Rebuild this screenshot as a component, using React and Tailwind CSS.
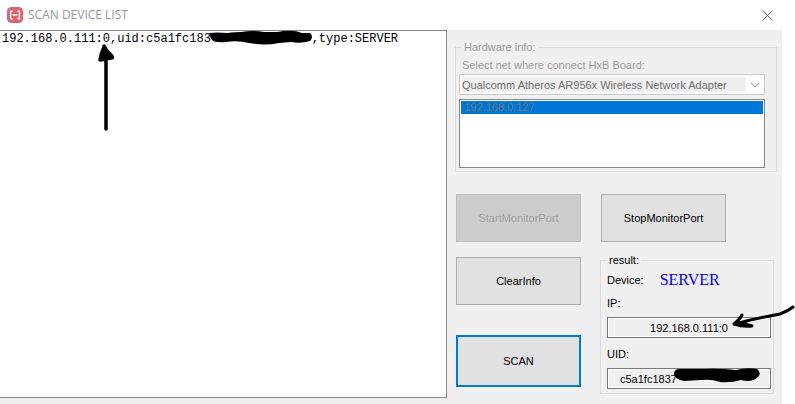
const BUTTON =
  "flex w-full items-center justify-center border text-[11px] leading-4";

function ActionButton({ children, className, disabled }) {
  return (
    <button type="button" disabled={disabled} className={`${BUTTON} ${className}`}>
      {children}
    </button>
  );
}

function AppIcon() {
  return (
    <svg viewBox="0 0 16 16" className="size-4" aria-hidden="true">
      <rect width="16" height="16" rx="4.5" fill="#df6272" />
      <path
        d="M5.6 4.2H3.6V11.8H5.6M10.4 4.2H12.4V11.8H10.4M5.6 8H10.4"
        fill="none"
        stroke="#fff"
        strokeWidth="1.4"
      />
    </svg>
  );
}

function ResultField({ id, label, value, className, children }) {
  return (
    <div className={className}>
      <label htmlFor={id} className="block">
        {label}
      </label>
      <div className="relative mt-[6px]">
        <input
          id={id}
          readOnly
          value={value}
          className="block h-[21px] w-full border border-[#7a7a7a] bg-[#f0f0f0] px-3 text-[11px] outline-none ring-1 ring-inset ring-white text-inherit [text-align:inherit]"
        />
        {children}
      </div>
    </div>
  );
}

export default function App() {
  return (
    <div className="flex min-h-screen flex-col bg-white pr-[13px] font-['Liberation_Sans',Arial,sans-serif] text-[11px] leading-4 text-black">
      <header className="flex h-[30px] items-center gap-[5px] pl-[7px] pr-2">
        <AppIcon />
        <h1 className="flex-1 font-['Open_Sans',sans-serif] text-[12px] text-[#999]">
          SCAN DEVICE LIST
        </h1>
        <button type="button" aria-label="Close" className="p-px">
          <svg viewBox="0 0 11 11" className="size-[11px]" aria-hidden="true">
            <path d="M.5 .5L10.5 10.5M10.5 .5L.5 10.5" stroke="#777" fill="none" />
          </svg>
        </button>
      </header>

      <main className="flex flex-1 items-start bg-[#f0f0f0]">
        <div className="relative min-w-0 flex-1">
          <textarea
            readOnly
            aria-label="Scan log"
            value={"192.168.0.111:0,uid:c5a1fc183" + "\u00a0".repeat(14) + ",type:SERVER"}
            className="block h-[368px] w-full resize-none overflow-hidden whitespace-pre border-y border-r border-[#828790] bg-white pl-[2px] font-['Liberation_Mono',monospace] text-[12px] leading-4 outline-none"
          />
          <svg viewBox="0 0 104 15" className="absolute left-[209px] top-0 h-[15px] w-[104px]" aria-hidden="true">
            <path d="M0 3Q8 2 18 3Q27 2 32 2Q44 0 55 2L68 2Q84 -1 93 3L101 3Q105 7 101 11Q92 14 82 12L70 13Q55 16 40 13Q28 10 17 12Q6 13 3 10Q1 7 0 3Z" />
          </svg>
          <svg viewBox="0 0 18 88" className="absolute left-[97px] top-[13px] h-[88px] w-[18px]" aria-hidden="true">
            <path
              d="M9 86V6M7 4Q4 10 3 17L14 15Q17 15 14 12Q10 9 7 3Z"
              stroke="#000"
              strokeWidth="3.5"
              strokeLinecap="round"
              strokeLinejoin="round"
            />
          </svg>
        </div>

        <section className="w-[335px] shrink-0 pl-2 pr-[5px] pt-[9px]">
          <fieldset disabled className="border border-[#dcdcdc] pb-[3px] pl-[3px] pr-[11px] text-[#9a9a9a]">
            <legend className="ml-[3px] px-[2px]">Hardware info:</legend>
            <label htmlFor="net" className="block pl-[3px] pt-[2px]">
              Select net where connect HxB Board:
            </label>
            <div className="relative mt-px">
              <select
                id="net"
                className="block h-[21px] w-full appearance-none border border-[#ccc] bg-[#f0f0f0] pl-[2px] text-[11px] text-[#6d6d6d] opacity-100 ring-2 ring-inset ring-white"
              >
                <option>Qualcomm Atheros AR956x Wireless Network Adapter</option>
              </select>
              <span className="pointer-events-none absolute inset-y-px right-px flex w-[18px] items-center justify-center bg-white">
                <svg viewBox="0 0 10 6" className="h-[6px] w-[10px]" aria-hidden="true">
                  <path d="M1 .8L5 4.8L9 .8" fill="none" stroke="#aaa" strokeWidth="1.2" />
                </svg>
              </span>
            </div>
            <ul
              role="listbox"
              aria-label="Addresses"
              aria-disabled="true"
              className="mt-1 h-[69px] border border-[#828790] bg-white p-px"
            >
              <li role="option" aria-selected="true" className="h-[13px] bg-[#0078d7] pl-[3px] leading-[13px] text-[#6d6d6d]">
                192.168.0.127
              </li>
            </ul>
          </fieldset>

          <div className="mt-[22px] flex items-start gap-[19px] pl-px">
            <div className="w-[125px]">
              <ActionButton disabled className="h-12 border-[#bfbfbf] bg-[#ccc] text-[#a0a0a0]">
                StartMonitorPort
              </ActionButton>
              <ActionButton className="mt-[15px] h-12 border-[#adadad] bg-[#e1e1e1]">ClearInfo</ActionButton>
              <ActionButton className="mt-[30px] h-[52px] border-2 border-[#0078d7] bg-[#e1e1e1]">SCAN</ActionButton>
            </div>
            <div className="w-[174px]">
              <div className="w-[126px] pl-px">
                <ActionButton className="h-12 border-[#adadad] bg-[#e1e1e1]">StopMonitorPort</ActionButton>
              </div>
              <fieldset className="mt-[10px] border border-[#dcdcdc] pb-1 pl-[6px] pr-[2px]">
                <legend className="px-[2px]">result:</legend>
                <div className="flex h-6 items-center gap-4">
                  <span>Device:</span>
                  <output className="font-['Liberation_Serif',serif] text-[16px] leading-5 text-[#0000ff]">
                    SERVER
                  </output>
                </div>
                <ResultField id="ip" label="IP:" value="192.168.0.111:0" className="mt-[3px] text-center [&>label]:text-left">
                  <svg viewBox="0 0 64 24" className="absolute left-[124px] top-[-13px] h-6 w-16" aria-hidden="true">
                    <path
                      d="M62 3Q57 7 49 10Q26 14 4 20M11 11Q9 15 3 20Q12 23 21 22L11 19"
                      fill="none"
                      stroke="#000"
                      strokeWidth="3"
                      strokeLinecap="round"
                      strokeLinejoin="round"
                    />
                  </svg>
                </ResultField>
                <ResultField id="uid" label="UID:" value="c5a1fc1837" className="mt-2">
                  <svg viewBox="0 0 86 15" className="absolute left-[67px] top-0 h-[15px] w-[86px]" aria-hidden="true">
                    <path d="M4 1L28 1Q45 0 62 2Q74 -1 83 1Q88 5 84 9Q78 15 67 12Q57 15 46 14Q38 11 27 12L10 13Q0 11 0 6Q0 2 4 1Z" />
                  </svg>
                </ResultField>
              </fieldset>
            </div>
          </div>
        </section>
      </main>
    </div>
  );
}
